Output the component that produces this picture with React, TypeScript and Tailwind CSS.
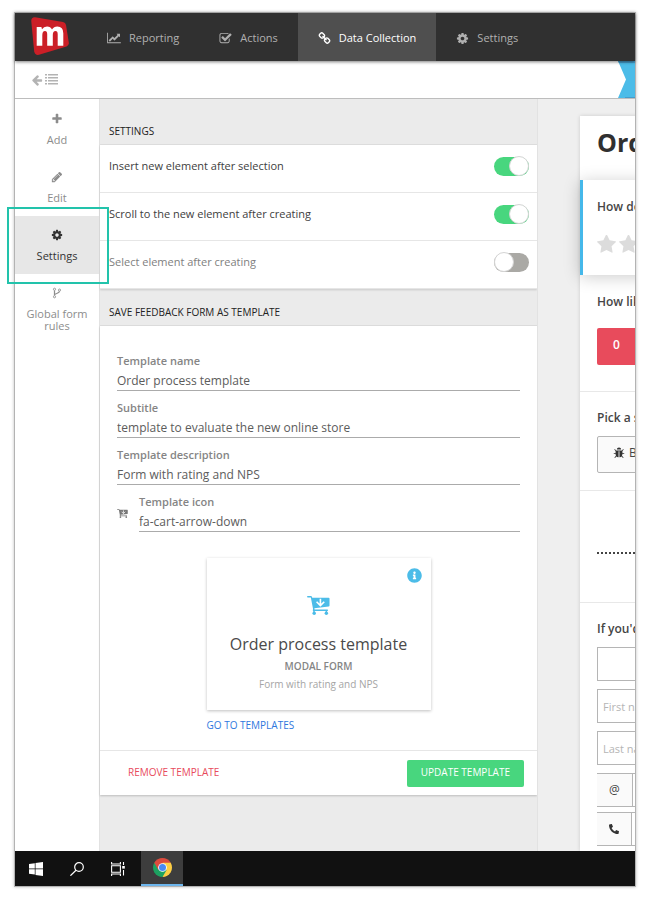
import { useState, type ReactNode } from 'react';
import { FaInfoCircle, FaPhone } from 'react-icons/fa';

type IconProps = { className?: string };

function LineChartIcon({ className }: IconProps) {
  return (
    <svg viewBox="0 0 2048 1792" fill="currentColor" className={className} aria-hidden="true">
      <path d="M2048 1536v128h-2048v-1536h128v1408h1920zm-128-1248v435q0 21-19.5 29.5t-35.5-7.5l-121-121-633 633q-10 10-23 10t-23-10l-233-233-416 416-192-192 585-585q10-10 23-10t23 10l233 233 464-464-121-121q-16-16-7.5-35.5t29.5-19.5h435q14 0 23 9t9 23z" />
    </svg>
  );
}

function CheckSquareIcon({ className }: IconProps) {
  return (
    <svg viewBox="0 0 1792 1792" fill="currentColor" className={className} aria-hidden="true">
      <path d="M1472 930v318q0 119-84.5 203.5t-203.5 84.5h-832q-119 0-203.5-84.5t-84.5-203.5v-832q0-119 84.5-203.5t203.5-84.5h832q63 0 117 25 15 7 18 23 3 17-9 29l-49 49q-10 10-23 10-3 0-9-2-23-6-45-6h-832q-66 0-113 47t-47 113v832q0 66 47 113t113 47h832q66 0 113-47t47-113v-254q0-13 9-22l64-64q10-10 23-10 6 0 12 3 20 8 20 29zm231-489l-814 814q-24 24-57 24t-57-24l-430-430q-24-24-24-57t24-57l110-110q24-24 57-24t57 24l263 263 647-647q24-24 57-24t57 24l110 110q24 24 24 57t-24 57z" />
    </svg>
  );
}

function ChainIcon({ className }: IconProps) {
  return (
    <svg viewBox="0 0 1792 1792" fill="currentColor" className={className} aria-hidden="true">
      <path d="M1520 1216q0-40-28-68l-208-208q-28-28-68-28-42 0-72 32 3 3 19 18.5t21.5 21.5 15 19 13 25.5 3.5 27.5q0 40-28 68t-68 28q-15 0-27.5-3.5t-25.5-13-19-15-21.5-21.5-18.5-19q-33 31-33 73 0 40 28 68l206 207q27 27 68 27 40 0 68-26l147-146q28-28 28-67zm-703-705q0-40-28-68l-206-207q-28-28-68-28-39 0-68 27l-147 146q-28 28-28 67 0 40 28 68l208 208q27 27 68 27 42 0 72-31-3-3-19-18.5t-21.5-21.5-15-19-13-25.5-3.5-27.5q0-40 28-68t68-28q15 0 27.5 3.5t25.5 13 19 15 21.5 21.5 18.5 19q33-31 33-73zm895 705q0 120-85 203l-147 146q-83 83-203 83-121 0-204-85l-206-207q-83-83-83-203 0-123 88-209l-88-88q-86 88-208 88-120 0-204-84l-208-208q-84-84-84-204t85-203l147-146q83-83 203-83 121 0 204 85l206 207q83 83 83 203 0 123-88 209l88 88q86-88 208-88 120 0 204 84l208 208q84 84 84 204z" />
    </svg>
  );
}

function CogIcon({ className }: IconProps) {
  return (
    <svg viewBox="0 0 1792 1792" fill="currentColor" className={className} aria-hidden="true">
      <path d="M1152 896q0-106-75-181t-181-75-181 75-75 181 75 181 181 75 181-75 75-181zm512-109v222q0 12-8 23t-20 13l-185 28q-19 54-39 91 35 50 107 138 10 12 10 25t-9 23q-27 37-99 108t-94 71q-12 0-26-9l-138-108q-44 23-91 38-16 136-29 186-7 28-36 28h-222q-14 0-24.5-8.5t-11.5-21.5l-28-184q-49-16-90-37l-141 107q-10 9-25 9-14 0-25-11-126-114-165-168-7-10-7-23 0-12 8-23 15-21 51-66.5t54-70.5q-27-50-41-99l-183-27q-13-2-21-12.5t-8-23.5v-222q0-12 8-23t19-13l186-28q14-46 39-92-40-57-107-138-10-12-10-24 0-10 9-23 26-36 98.5-107.5t94.5-71.5q13 0 26 10l138 107q44-23 91-38 16-136 29-186 7-28 36-28h222q14 0 24.5 8.5t11.5 21.5l28 184q49 16 90 37l142-107q9-9 24-9 13 0 25 10 129 119 165 170 7 8 7 22 0 12-8 23-15 21-51 66.5t-54 70.5q26 50 41 98l183 28q13 2 21 12.5t8 23.5z" />
    </svg>
  );
}

function PencilIcon({ className }: IconProps) {
  return (
    <svg viewBox="0 0 1792 1792" fill="currentColor" className={className} aria-hidden="true">
      <path d="M491 1536l91-91-235-235-91 91v107h128v128h107zm523-928q0-22-22-22-10 0-17 7l-542 542q-7 7-7 17 0 22 22 22 10 0 17-7l542-542q7-7 7-17zm-54-192l416 416-832 832h-416v-416zm683 96q0 53-37 90l-166 166-416-416 166-165q36-38 90-38 53 0 91 38l235 234q37 39 37 91z" />
    </svg>
  );
}

function PlusIcon({ className }: IconProps) {
  return (
    <svg viewBox="0 0 1792 1792" fill="currentColor" className={className} aria-hidden="true">
      <path d="M1600 736v192q0 40-28 68t-68 28h-416v416q0 40-28 68t-68 28h-192q-40 0-68-28t-28-68v-416h-416q-40 0-68-28t-28-68v-192q0-40 28-68t68-28h416v-416q0-40 28-68t68-28h192q40 0 68 28t28 68v416h416q40 0 68 28t28 68z" />
    </svg>
  );
}

function ArrowLeftIcon({ className }: IconProps) {
  return (
    <svg viewBox="0 0 1792 1792" fill="currentColor" className={className} aria-hidden="true">
      <path d="M1664 896v128q0 53-32.5 90.5t-84.5 37.5h-704l293 294q38 36 38 90t-38 90l-75 76q-37 37-90 37-52 0-91-37l-651-652q-37-37-37-90 0-52 37-91l651-650q38-38 91-38 52 0 90 38l75 74q38 38 38 91t-38 91l-293 293h704q52 0 84.5 37.5t32.5 90.5z" />
    </svg>
  );
}

function StarIcon({ className }: IconProps) {
  return (
    <svg viewBox="64 64 1664 1664" fill="currentColor" className={className} aria-hidden="true">
      <path d="M1728 647q0 22-26 48l-363 354 86 500q1 7 1 20 0 21-10.5 35.5t-30.5 14.5q-19 0-40-12l-449-236-449 236q-22 12-40 12-21 0-31.5-14.5t-10.5-35.5q0-6 2-20l86-500-364-354q-25-27-25-48 0-37 56-46l502-73 225-455q19-41 49-41t49 41l225 455 502 73q56 9 56 46z" />
    </svg>
  );
}

function BugIcon({ className }: IconProps) {
  return (
    <svg viewBox="0 0 1792 1792" fill="currentColor" className={className} aria-hidden="true">
      <path d="M1696 960q0 26-19 45t-45 19h-224q0 171-67 290l208 209q19 19 19 45t-19 45q-18 19-45 19t-45-19l-198-197q-5 5-15 13t-42 28.5-65 36.5-82 29-97 13v-896h-128v896q-51 0-101.5-13.5t-87-33-66-39-43.5-32.5l-15-14-183 207q-20 21-48 21-24 0-43-16-19-18-20.5-44.5t15.5-46.5l202-227q-58-114-58-274h-224q-26 0-45-19t-19-45 19-45 45-19h224v-294l-173-173q-19-19-19-45t19-45 45-19 45 19l173 173h844l173-173q19-19 45-19t45 19 19 45-19 45l-173 173v294h224q26 0 45 19t19 45zm-480-576h-640q0-133 93.5-226.5t226.500-93.500 226.500 93.500 93.500 226.500z" />
    </svg>
  );
}

function ForkIcon({ className }: IconProps) {
  return (
    <svg viewBox="0 0 12 14" fill="none" stroke="currentColor" strokeWidth="1" className={className} aria-hidden="true">
      <circle cx="3" cy="2.5" r="1.3" />
      <circle cx="9" cy="3.5" r="1.3" />
      <circle cx="3" cy="11.5" r="1.3" />
      <path d="M3 4v6M9 5c0 3-6 2.2-6 4.5" strokeWidth="1.5" />
    </svg>
  );
}

function ListIcon({ className }: IconProps) {
  return (
    <svg viewBox="0 0 13 11" fill="currentColor" className={className} aria-hidden="true">
      <path d="M0 0h2v1.500H0zM3 0h10v1.500H3zM0 3h2v1.500H0zM3 3h10v1.500H3zM0 6h2v1.500H0zM3 6h10v1.500H3zM0 9h2v1.500H0zM3 9h10v1.500H3z" />
    </svg>
  );
}

function CartIcon({ className }: IconProps) {
  return (
    <svg viewBox="0 0 24 20" className={className} aria-hidden="true">
      <path fill="currentColor" d="M0 .8Q0 0 .9 0H4.200Q5.200 0 5.500 1.700H22.700Q23.500 1.700 23.500 2.600V10Q23.500 10.900 22.600 11L7.700 12.800 7.900 14H21.300Q22 14 22 14.800T21.300 15.600H6.700Q6 15.600 6 14.800L6.300 13.500 4 1.600H.9Q0 1.600 0 .8z" />
      <circle cx="7.500" cy="18" r="1.800" fill="currentColor" />
      <circle cx="20.200" cy="18" r="1.800" fill="currentColor" />
      <path d="M7.300 15v3M20.200 15v3" stroke="currentColor" strokeWidth="1.500" />
      <path fill="none" stroke="#fff" strokeWidth="1.700" d="M14 3v6.500M10 6l4 4 4-4" />
    </svg>
  );
}

function Logo() {
  return (
    <svg viewBox="0 0 38 38" className="w-[38px]" role="img" aria-label="mopinion">
      <path fill="#cb1f27" d="M4 .2 32 5Q34.500 5.600 35 8L37.800 25.500Q38.200 28.500 35.500 29.500L8 37.800Q4 38.500 3.200 34.500L.3 4.500Q0 0 4 .2z" />
      <path
        fill="#fff"
        d="M5.700 9.900H10.400L11 12.300Q12.600 9.500 16 9.500 19.600 9.500 21 12.400 22.800 9.500 26.300 9.500 32.300 9.500 32.300 16.300V28.700H26.700V17.300Q26.700 14 24.500 14 21.800 14 21.800 18V28.700H16.200V17.300Q16.200 14 14 14 11.300 14 11.300 18.300V28.700H5.700z"
      />
    </svg>
  );
}

function ChromeIcon({ className }: IconProps) {
  return (
    <svg viewBox="0 0 20 20" className={className} aria-hidden="true">
      <path fill="#dd4b3e" d="M10 10 1.340 5A10 10 0 0 1 18.660 5z" />
      <path fill="#fdce44" d="M10 10V5h8.660A10 10 0 0 1 10 20z" />
      <path fill="#1da261" d="M1.340 5A10 10 0 0 0 10 20l4.330-7.500L10 10z" />
      <path fill="#dd4b3e" d="M1.340 5 5.700 12.500 10 10l.5-5z" />
      <circle cx="10" cy="10" r="4.600" fill="#fff" />
      <circle cx="10" cy="10" r="3.700" fill="#4a8af4" />
    </svg>
  );
}

const navItems = [
  { label: 'Reporting', icon: <LineChartIcon className="h-3 w-3.5" /> },
  { label: 'Actions', icon: <CheckSquareIcon className="size-[13px]" /> },
  { label: 'Data Collection', icon: <ChainIcon className="size-[13px]" />, active: true },
  { label: 'Settings', icon: <CogIcon className="size-[13px]" /> },
];

const sideItems = [
  { label: 'Add', icon: <PlusIcon className="size-3" /> },
  { label: 'Edit', icon: <PencilIcon className="size-3" /> },
  { label: 'Settings', icon: <CogIcon className="size-3" />, active: true },
  { label: 'Global form rules', icon: <ForkIcon className="h-3 w-2.5" /> },
];

const options = [
  { id: 'insert', label: 'Insert new element after selection', on: true },
  { id: 'scroll', label: 'Scroll to the new element after creating', on: true },
  { id: 'select', label: 'Select element after creating', on: false },
];

function Toggle({ id, label, on }: { id: string; label: string; on: boolean }) {
  const [checked, setChecked] = useState(on);
  return (
    <div className="flex h-12 items-center justify-between border-b border-[#e6e6e6] pr-2 pb-[5px] pl-[9px] text-[11px]">
      <label htmlFor={id} className={checked ? 'text-[#404040]' : 'text-[#808080]'}>
        {label}
      </label>
      <input
        id={id}
        type="checkbox"
        checked={checked}
        onChange={(e) => setChecked(e.target.checked)}
        className="flex h-[19px] w-[35px] appearance-none items-center rounded-full bg-[#aaa9a5] before:size-5 before:rounded-full before:border before:border-[#d4d4d4] before:bg-white before:content-[''] checked:justify-end checked:bg-[#48d67e]"
      />
    </div>
  );
}

function Field({ id, label, value }: { id: string; label: string; value: string }) {
  return (
    <div className="min-w-0 flex-1 border-b border-[#ababab]">
      <label htmlFor={id} className="block h-5 text-[11px] leading-5 font-semibold text-[#858585]">
        {label}
      </label>
      <input id={id} defaultValue={value} className="block h-[19px] w-full text-[#5c5c5c] outline-none" />
    </div>
  );
}

function SectionTitle({ children }: { children: ReactNode }) {
  return <h2 className="text-[10px] leading-4 font-medium text-[#222]">{children}</h2>;
}

function Preview() {
  return (
    <aside className="w-[98px] overflow-hidden border-l border-[#e2e2e2] bg-[#efefef] pt-[17px] pl-[42px] md:w-[420px]">
      <form className="flex h-full w-[360px] flex-col bg-white font-semibold text-[#454545] shadow-[0_0_4px_rgba(0,0,0,0.15)]">
        <h1 className="h-16 pt-2.5 pl-[17px] text-[25px] leading-8 font-bold text-[#303030]">Order process</h1>
        <div className="h-[95px] border-l-3 border-[#45b8ea] bg-white pt-[17px] pl-3.5 shadow-[0_2px_16px_rgba(0,0,0,0.2)]">
          <p className="leading-5">How do you rate our order process?</p>
          <div className="mt-[18px] flex gap-[3px] text-[#dcdcdc]">
            {[1, 2, 3, 4, 5].map((n) => (
              <button key={n} type="button" aria-label={`${n} stars`}>
                <StarIcon className="size-[19px]" />
              </button>
            ))}
          </div>
        </div>
        <div className="h-[117px] border-b border-[#e8e8e8] pt-[17px] pl-[17px]">
          <p className="leading-5">How likely are you to recommend us?</p>
          <button type="button" className="mt-4 h-[37px] w-[39px] rounded-l-xs bg-[#e84b5c] pb-1 text-white">
            0
          </button>
        </div>
        <div className="h-[99px] border-b border-[#e8e8e8] pt-4 pl-[17px]">
          <p className="leading-5">Pick a subject</p>
          <button
            type="button"
            className="mt-2 flex h-[37px] items-center gap-1 rounded-xs border border-[#b5b5b5] bg-[#fafafa] px-[15px] pb-1 font-normal"
          >
            <BugIcon className="size-3 text-[#333]" />
            Bug
          </button>
        </div>
        <div className="h-[112px] border-b border-[#e8e8e8] px-[17px] pt-[61px]">
          <hr className="border-0 border-t-2 border-dotted border-[#444]" />
        </div>
        <div className="flex flex-col gap-2 pt-4 pl-[17px]">
          <p className="leading-5">If you'd like to hear from us</p>
          <select aria-label="Title" className="h-[34px] w-72 appearance-none border border-[#b5b5b5] bg-white" />
          <input
            aria-label="First name"
            placeholder="First name"
            className="h-[34px] w-72 border border-[#b5b5b5] px-[5px] text-[11px] font-normal placeholder:text-[#b5b5b5]"
          />
          <input
            aria-label="Last name"
            placeholder="Last name"
            className="h-[34px] w-72 border border-[#b5b5b5] px-[5px] text-[11px] font-normal placeholder:text-[#b5b5b5]"
          />
          <div className="flex h-[34px] w-72 border-y border-[#b5b5b5] font-normal">
            <span className="flex w-9 items-center justify-center border-r border-[#b5b5b5] bg-[#fafafa]">@</span>
            <input aria-label="Email" type="email" className="flex-1" />
          </div>
          <div className="-mt-[3px] flex h-[34px] w-72 border-y border-[#b5b5b5]">
            <span className="flex w-[35px] items-center justify-center border-r border-[#b5b5b5] bg-[#fafafa]">
              <FaPhone className="size-2.5 -scale-x-100 text-[#333]" />
            </span>
            <input aria-label="Phone" type="tel" className="flex-1" />
          </div>
        </div>
      </form>
    </aside>
  );
}

function Taskbar() {
  return (
    <footer className="flex h-[35px] bg-[#111] text-white">
      <button aria-label="Start" className="flex w-[42px] items-center justify-center">
        <svg viewBox="0 0 14 14" className="w-3.5" fill="currentColor">
          <path d="M0 2l5.800-.8v5.300H0zM6.500 1.100 14 0v6.500H6.500zM0 7.200h5.800v5.400L0 11.800zM6.500 7.200H14V14l-7.500-1.100z" />
        </svg>
      </button>
      <button aria-label="Search" className="flex w-[42px] items-center justify-center pr-0.5">
        <svg viewBox="0 0 14 14" className="w-3.5" fill="none" stroke="currentColor" strokeWidth="1.200">
          <circle cx="9" cy="5" r="4.300" />
          <path d="M6 8.200.4 13.700" />
        </svg>
      </button>
      <button aria-label="Task view" className="flex w-[42px] items-center justify-center pr-1">
        <svg viewBox="0 0 14 14" className="w-3.5" fill="none" stroke="currentColor" strokeWidth="1.100">
          <path d="M.6 3.700h8.800v6.600H.6zM.6 0v2h8.800V0M.6 14v-2h8.800v2M12.500 0v3M12.500 8v5.500" />
          <path fill="currentColor" stroke="none" d="M11.200 4h2.600v2.600h-2.600z" />
        </svg>
      </button>
      <button aria-label="Chrome" className="flex w-[42px] items-center justify-center border-b-2 border-[#6db5ec] bg-[#3d3d3d]">
        <ChromeIcon className="size-[19px]" />
      </button>
    </footer>
  );
}

export default function App() {
  return (
    <div className="flex min-h-screen bg-white px-[15px] py-[13px] font-['Open_Sans',sans-serif] text-xs text-[#4a4a4a]">
      <div className="flex min-w-0 flex-1 flex-col shadow-[0_0_0_1px_#b3b3b3,0_0_3px_1px_rgba(0,0,0,0.25)]">
        {/* Top navigation */}
        <header className="relative flex h-12 bg-[#303030] shadow-[0_1px_3px_rgba(0,0,0,0.5)]">
          <a href="#" className="flex w-[72px] items-center pb-0.5 pl-4">
            <Logo />
          </a>
          <nav className="flex text-[11px]">
            {navItems.map((item) => (
              <a
                key={item.label}
                href="#"
                className={`flex items-center gap-2 px-5 pt-0.5 ${item.active ? 'bg-[#4f4f4f] text-white' : 'text-[#b0b0b0]'}`}
              >
                {item.icon}
                {item.label}
              </a>
            ))}
          </nav>
        </header>

        {/* Breadcrumb bar */}
        <div className="flex h-[38px] items-center justify-between border-b border-[#bdbdbd] bg-white pl-4 text-[#b3b3b3]">
          <div className="flex items-center gap-0.5">
            <button aria-label="Back">
              <ArrowLeftIcon className="size-3" />
            </button>
            <button aria-label="List">
              <ListIcon className="w-[13px]" />
            </button>
          </div>
          <svg viewBox="0 0 17 37" className="h-[37px] w-[17px]" aria-hidden="true">
            <path fill="#4cbce8" d="M0 0h17v37H0l8-18.500z" />
            <path fill="#459dcb" d="M0 0h17v2H1zM7 36h10v1H7z" />
          </svg>
        </div>

        <main className="flex flex-1">
          {/* Side menu */}
          <nav className="w-[84px] bg-white pt-px text-[11px]">
            {sideItems.map((item) => (
              <a
                key={item.label}
                href="#"
                className={`relative flex h-[58px] flex-col items-center gap-[9px] px-2 pt-[13px] text-center leading-3 ${
                  item.active ? 'bg-[#e7e7e7] text-[#333]' : 'text-[#8c8c8c]'
                }`}
              >
                <span className="flex h-3 items-center">{item.icon}</span>
                {item.label}
                {item.active && (
                  <span className="absolute -top-[9px] -right-[10px] -bottom-[10px] -left-2 z-10 border-2 border-[#22c3ab]" />
                )}
              </a>
            ))}
          </nav>

          {/* Settings panel */}
          <section className="min-w-0 flex-1 border-l border-[#e2e2e2] bg-[#ebebeb]">
            <div className="flex h-[46px] items-end border-b border-[#dedede] px-[9px] pb-[5px]">
              <SectionTitle>SETTINGS</SectionTitle>
            </div>
            <div className="bg-white shadow-[0_1px_2px_rgba(0,0,0,0.15)]">
              {options.map((option) => (
                <Toggle key={option.id} {...option} />
              ))}
            </div>
            <div className="flex h-[37px] items-center border-b border-[#dedede] px-[9px] pt-2.5">
              <SectionTitle>SAVE FEEDBACK FORM AS TEMPLATE</SectionTitle>
            </div>
            <form className="bg-white shadow-[0_1px_2px_rgba(0,0,0,0.2)]" onSubmit={(e) => e.preventDefault()}>
              <div className="flex flex-col gap-[7px] px-[17px] pt-[25px]">
                <Field id="name" label="Template name" value="Order process template" />
                <Field id="subtitle" label="Subtitle" value="template to evaluate the new online store" />
                <Field id="description" label="Template description" value="Form with rating and NPS" />
                <div className="flex items-center gap-[11px]">
                  <CartIcon className="mt-1 w-[11px] text-[#777]" />
                  <Field id="icon" label="Template icon" value="fa-cart-arrow-down" />
                </div>
              </div>
              <div className="mx-auto mt-[26px] w-56">
                <div className="relative flex h-[152px] flex-col items-center pt-[38px] shadow-[0_1px_3px_rgba(0,0,0,0.25)]">
                  <button type="button" aria-label="Info" className="absolute top-2.5 right-[9px] text-[#4cbce8]">
                    <FaInfoCircle className="size-[15px]" />
                  </button>
                  <CartIcon className="w-[23px] text-[#4cbce8]" />
                  <h3 className="mt-[17px] text-base leading-6 text-[#4a4a4a]">Order process template</h3>
                  <p className="mt-0.5 text-[10px] leading-4 font-semibold text-[#858585]">MODAL FORM</p>
                  <p className="mt-0.5 text-[10px] leading-4 text-[#a5a5a5]">Form with rating and NPS</p>
                </div>
                <a href="#" className="mt-[7px] mb-[17px] block text-[10px] leading-4 font-medium text-[#2f78de]">
                  GO TO TEMPLATES
                </a>
              </div>
              <div className="flex h-[45px] items-center justify-between border-t border-[#e6e6e6] pr-[13px] pl-7 text-[10px] font-medium">
                <button type="button" className="text-[#e84b5c]">
                  REMOVE TEMPLATE
                </button>
                <button type="submit" className="h-[27px] rounded-xs bg-[#48d67e] px-3.5 text-white">
                  UPDATE TEMPLATE
                </button>
              </div>
            </form>
          </section>

          <Preview />
        </main>

        <Taskbar />
      </div>
    </div>
  );
}
